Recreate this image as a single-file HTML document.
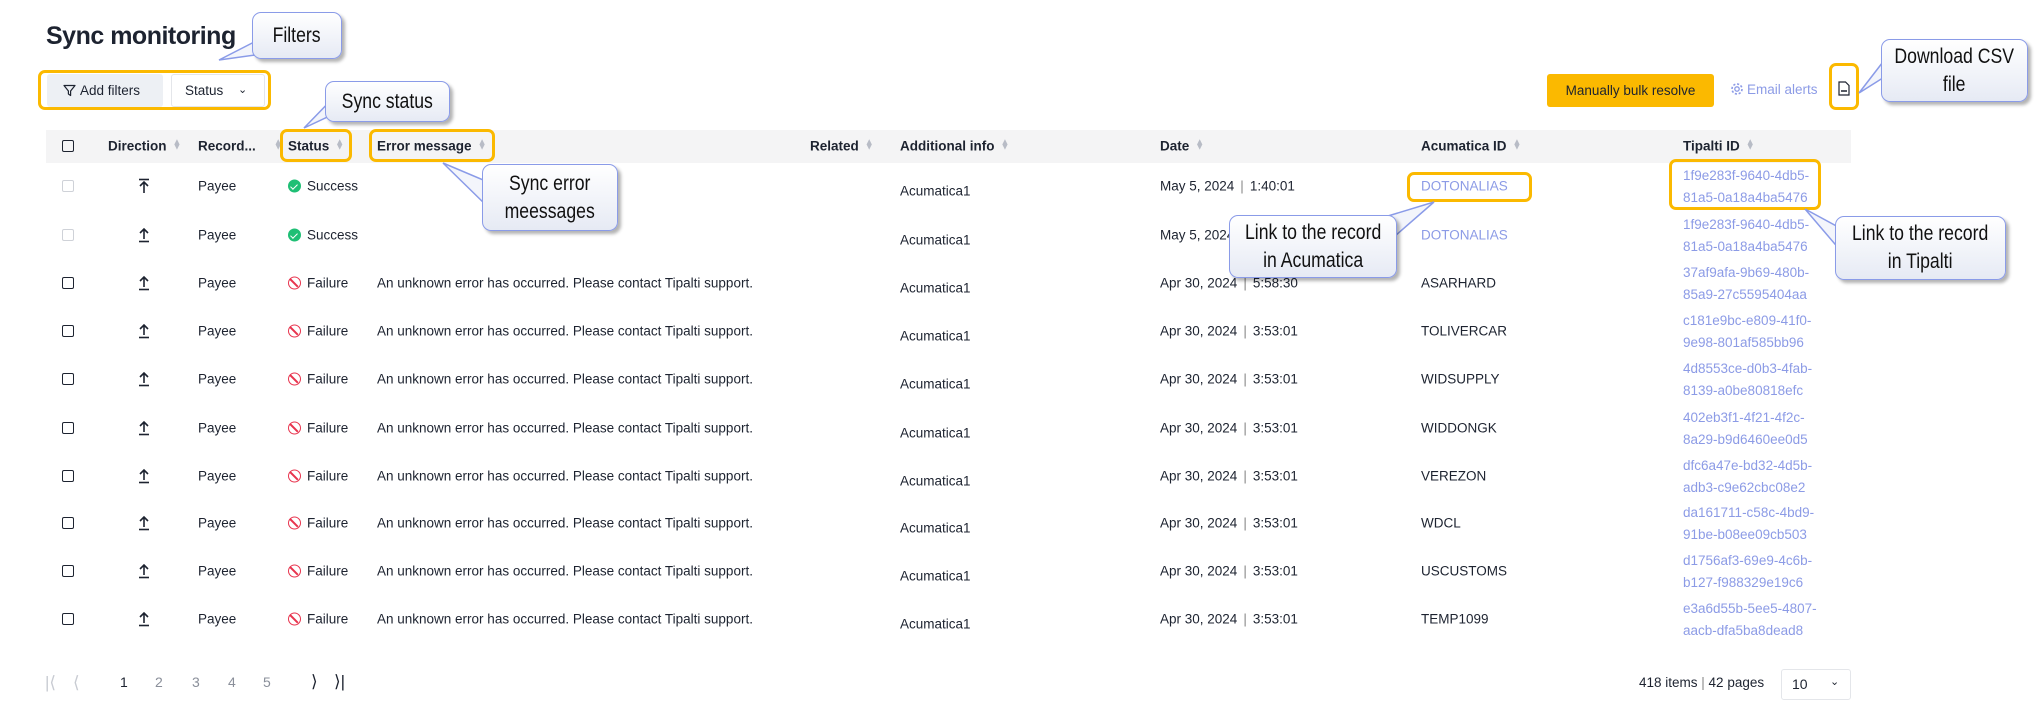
<!DOCTYPE html>
<html><head><meta charset="utf-8"><style>
*{box-sizing:border-box;margin:0;padding:0}
body{width:2044px;height:723px;position:relative;background:#fff;font-family:"Liberation Sans",sans-serif;color:#1d2330;overflow:hidden;font-size:13.5px}
.a{position:absolute;white-space:nowrap}
.hdr{position:absolute;left:46px;top:130px;width:1805px;height:33px;background:#f4f4f5}
.h{position:absolute;top:146px;transform:translateY(-50%);font-weight:bold;font-size:13.5px;color:#1d2330;white-space:nowrap}
.s{display:inline-block;margin-left:6px;color:#b8bcc6;font-size:9px;vertical-align:1px;line-height:5px}
.cb{position:absolute;width:12px;height:12px;border:1.5px solid #1d2330;border-radius:2px}
.cbd{border-color:#cfd2d8}
.c{position:absolute;transform:translateY(-50%);white-space:nowrap}
.lk{color:#8c9be6}
.ok{display:inline-block;width:13px;height:13px;border-radius:50%;background:#1fbf75;vertical-align:-2px;margin-right:6px;position:relative}
.ok:after{content:"";position:absolute;left:4px;top:2.5px;width:3px;height:6px;border:solid #fff;border-width:0 1.6px 1.6px 0;transform:rotate(45deg)}
.no{display:inline-block;width:13px;height:13px;border-radius:50%;border:1.7px solid #e8344e;vertical-align:-2px;margin-right:6px;position:relative}
.no:after{content:"";position:absolute;left:4.2px;top:-0.5px;width:1.7px;height:11px;background:#e8344e;transform:rotate(-45deg)}
.ob{position:absolute;border:3.5px solid #fbb900;border-radius:7px}
.co{position:absolute;border:1.5px solid #8a9be8;border-radius:9px;background:linear-gradient(#ffffff,#e6eaf4);box-shadow:3px 3px 3px rgba(0,0,0,.3);font-family:"Liberation Sans",sans-serif;font-size:21px;color:#111;text-align:center;display:flex;align-items:center;justify-content:center;line-height:28px}
.co span{display:inline-block;transform:scaleX(.84);white-space:nowrap}
.ti{position:absolute;line-height:22px;color:#8c9be6}
</style></head><body>
<div class="a" style="left:46px;top:22px;font-size:25px;font-weight:bold;letter-spacing:-0.5px">Sync monitoring</div>

<div class="a" style="left:47px;top:74px;width:116px;height:33px;background:#edf0f4;border-radius:3px;font-size:13.5px;line-height:33px;padding-left:16px">
<svg width="13" height="13" viewBox="0 0 13 13" style="vertical-align:-2px;margin-right:4px"><path d="M1 1.5h11L7.6 7v4.5L5.4 10V7z" fill="none" stroke="#1d2330" stroke-width="1.2" stroke-linejoin="round"/></svg>Add filters</div>
<div class="a" style="left:171px;top:74px;width:94px;height:33px;border:1px solid #e4e6ea;border-radius:3px;line-height:31px;padding-left:13px">Status<span style="position:absolute;left:66px;top:0;font-size:11px">&#8964;</span></div>

<div class="a" style="left:1547px;top:74px;width:167px;height:33px;background:#fbb900;border-radius:3px;text-align:center;line-height:33px;font-size:13.5px">Manually bulk resolve</div>
<div class="a lk" style="left:1730px;top:82px;font-size:13.5px">
<svg width="14" height="14" viewBox="0 0 14 14" style="vertical-align:-2px;margin-right:3px"><circle cx="7" cy="7" r="2.2" fill="none" stroke="#8c9be6" stroke-width="1.3"/><circle cx="7" cy="7" r="5" fill="none" stroke="#8c9be6" stroke-width="1.6" stroke-dasharray="2.2 1.7"/></svg>Email alerts</div>
<svg class="a" style="left:1838px;top:81px" width="12" height="15" viewBox="0 0 12 15"><path d="M1 1h6.5L11 4.5V14H1z" fill="none" stroke="#1d2330" stroke-width="1.2"/><path d="M3 10h6" stroke="#1d2330" stroke-width="1.5"/></svg>

<div class="hdr"></div>
<div class="cb" style="left:62px;top:140px"></div>
<div class="h" style="left:108px">Direction<span class="s">&#9650;<br>&#9660;</span></div>
<div class="h" style="left:198px">Record...<span class="s" style="margin-left:18px">&#9650;<br>&#9660;</span></div>
<div class="h" style="left:288px">Status<span class="s">&#9650;<br>&#9660;</span></div>
<div class="h" style="left:377px">Error message<span class="s">&#9650;<br>&#9660;</span></div>
<div class="h" style="left:810px">Related<span class="s">&#9650;<br>&#9660;</span></div>
<div class="h" style="left:900px">Additional info<span class="s">&#9650;<br>&#9660;</span></div>
<div class="h" style="left:1160px">Date<span class="s">&#9650;<br>&#9660;</span></div>
<div class="h" style="left:1421px">Acumatica ID<span class="s">&#9650;<br>&#9660;</span></div>
<div class="h" style="left:1683px">Tipalti ID<span class="s">&#9650;<br>&#9660;</span></div>

<div id="rows"></div>
<script>
var R=[
[186,1,1,"Success","","May 5, 2024","1:40:01","DOTONALIAS",1,"1f9e283f-9640-4db5-","81a5-0a18a4ba5476"],
[235,1,0,"Success","","May 5, 2024","1:40:01","DOTONALIAS",1,"1f9e283f-9640-4db5-","81a5-0a18a4ba5476"],
[283,0,0,"Failure","E","Apr 30, 2024","5:58:30","ASARHARD",0,"37af9afa-9b69-480b-","85a9-27c5595404aa"],
[331,0,0,"Failure","E","Apr 30, 2024","3:53:01","TOLIVERCAR",0,"c181e9bc-e809-41f0-","9e98-801af585bb96"],
[379,0,0,"Failure","E","Apr 30, 2024","3:53:01","WIDSUPPLY",0,"4d8553ce-d0b3-4fab-","8139-a0be80818efc"],
[428,0,0,"Failure","E","Apr 30, 2024","3:53:01","WIDDONGK",0,"402eb3f1-4f21-4f2c-","8a29-b9d6460ee0d5"],
[476,0,0,"Failure","E","Apr 30, 2024","3:53:01","VEREZON",0,"dfc6a47e-bd32-4d5b-","adb3-c9e62cbc08e2"],
[523,0,0,"Failure","E","Apr 30, 2024","3:53:01","WDCL",0,"da161711-c58c-4bd9-","91be-b08ee09cb503"],
[571,0,0,"Failure","E","Apr 30, 2024","3:53:01","USCUSTOMS",0,"d1756af3-69e9-4c6b-","b127-f988329e19c6"],
[619,0,0,"Failure","E","Apr 30, 2024","3:53:01","TEMP1099",0,"e3a6d55b-5ee5-4807-","aacb-dfa5ba8dead8"]];
var h="";
R.forEach(function(r){var y=r[0];
h+='<div class="cb'+(r[1]?' cbd':'')+'" style="left:62px;top:'+(y-6)+'px"></div>';
h+='<svg class="a" style="left:138px;top:'+(y-8)+'px" width="12" height="16" viewBox="0 0 12 16">'+(r[2]?'<path d="M1 1.5h10" stroke="#1d2330" stroke-width="1.6"/><path d="M6 15V4M2 8l4-4 4 4" fill="none" stroke="#1d2330" stroke-width="1.6"/>':'<path d="M1 14.5h10" stroke="#1d2330" stroke-width="1.6"/><path d="M6 12V2M2 6l4-4 4 4" fill="none" stroke="#1d2330" stroke-width="1.6"/>')+'</svg>';
h+='<div class="c" style="left:198px;top:'+y+'px">Payee</div>';
h+='<div class="c" style="left:288px;top:'+y+'px"><span class="'+(r[3]=="Success"?"ok":"no")+'"></span>'+r[3]+'</div>';
if(r[4])h+='<div class="c" style="left:377px;top:'+y+'px">An unknown error has occurred. Please contact Tipalti support.</div>';
h+='<div class="c" style="left:900px;top:'+(y+5)+'px">Acumatica1</div>';
h+='<div class="c" style="left:1160px;top:'+y+'px">'+r[5]+'<span style="color:#888;margin:0 6px">|</span>'+r[6]+'</div>';
h+='<div class="c'+(r[8]?' lk':'')+'" style="left:1421px;top:'+y+'px">'+r[7]+'</div>';
h+='<div class="ti" style="left:1683px;top:'+(y-21)+'px">'+r[9]+'<br>'+r[10]+'</div>';});
document.getElementById("rows").innerHTML=h;
</script>

<div class="a" style="left:45px;top:673px;color:#c8cbd2;font-size:17px">|&#10216;</div>
<div class="a" style="left:73px;top:673px;color:#c8cbd2;font-size:17px">&#10216;</div>
<div class="a" style="left:120px;top:674px;font-size:14px">1</div>
<div class="a" style="left:155px;top:674px;font-size:14px;color:#8a8f9a">2</div>
<div class="a" style="left:192px;top:674px;font-size:14px;color:#8a8f9a">3</div>
<div class="a" style="left:228px;top:674px;font-size:14px;color:#8a8f9a">4</div>
<div class="a" style="left:263px;top:674px;font-size:14px;color:#8a8f9a">5</div>
<div class="a" style="left:311px;top:672px;font-size:17px">&#10217;</div>
<div class="a" style="left:334px;top:672px;font-size:17px">&#10217;|</div>
<div class="a" style="left:1639px;top:675px;font-size:13.5px">418 items <span style="color:#888">|</span> 42 pages</div>
<div class="a" style="left:1781px;top:669px;width:70px;height:31px;border:1px solid #e4e6ea;border-radius:3px;line-height:29px;padding-left:10px;font-size:14px">10<span style="position:absolute;left:48px;top:-2px;font-size:11px">&#8964;</span></div>

<div class="ob" style="left:38px;top:70px;width:233px;height:40px"></div>
<div class="ob" style="left:280px;top:129px;width:72px;height:33px"></div>
<div class="ob" style="left:369px;top:129px;width:126px;height:33px"></div>
<div class="ob" style="left:1407px;top:172px;width:125px;height:30px"></div>
<div class="ob" style="left:1669px;top:159px;width:152px;height:51px"></div>
<div class="ob" style="left:1829px;top:63px;width:30px;height:47px"></div>

<svg class="a" style="left:0;top:0" width="2044" height="723">
<g fill="#f3f5fb" stroke="#8a9be8" stroke-width="1.5">
<polygon points="262,38 262,54 219,60"/>
<polygon points="338,93 338,112 304,128"/>
<polygon points="488,182 488,207 443,163"/>
<polygon points="1378,219 1395,236 1434,202"/>
<polygon points="1840,228 1840,250 1805,209"/>
<polygon points="1886,58 1886,76 1859,93"/>
</g></svg>
<div class="co" style="left:252px;top:12px;width:90px;height:47px"><span>Filters</span></div>
<div class="co" style="left:325px;top:81px;width:125px;height:41px"><span>Sync status</span></div>
<div class="co" style="left:482px;top:164px;width:136px;height:67px"><span>Sync error<br>meessages</span></div>
<div class="co" style="left:1229px;top:215px;width:168px;height:63px"><span>Link to the record<br>in Acumatica</span></div>
<div class="co" style="left:1835px;top:216px;width:171px;height:64px"><span>Link to the record<br>in Tipalti</span></div>
<div class="co" style="left:1881px;top:39px;width:147px;height:63px"><span>Download CSV<br>file</span></div>
</body></html>
